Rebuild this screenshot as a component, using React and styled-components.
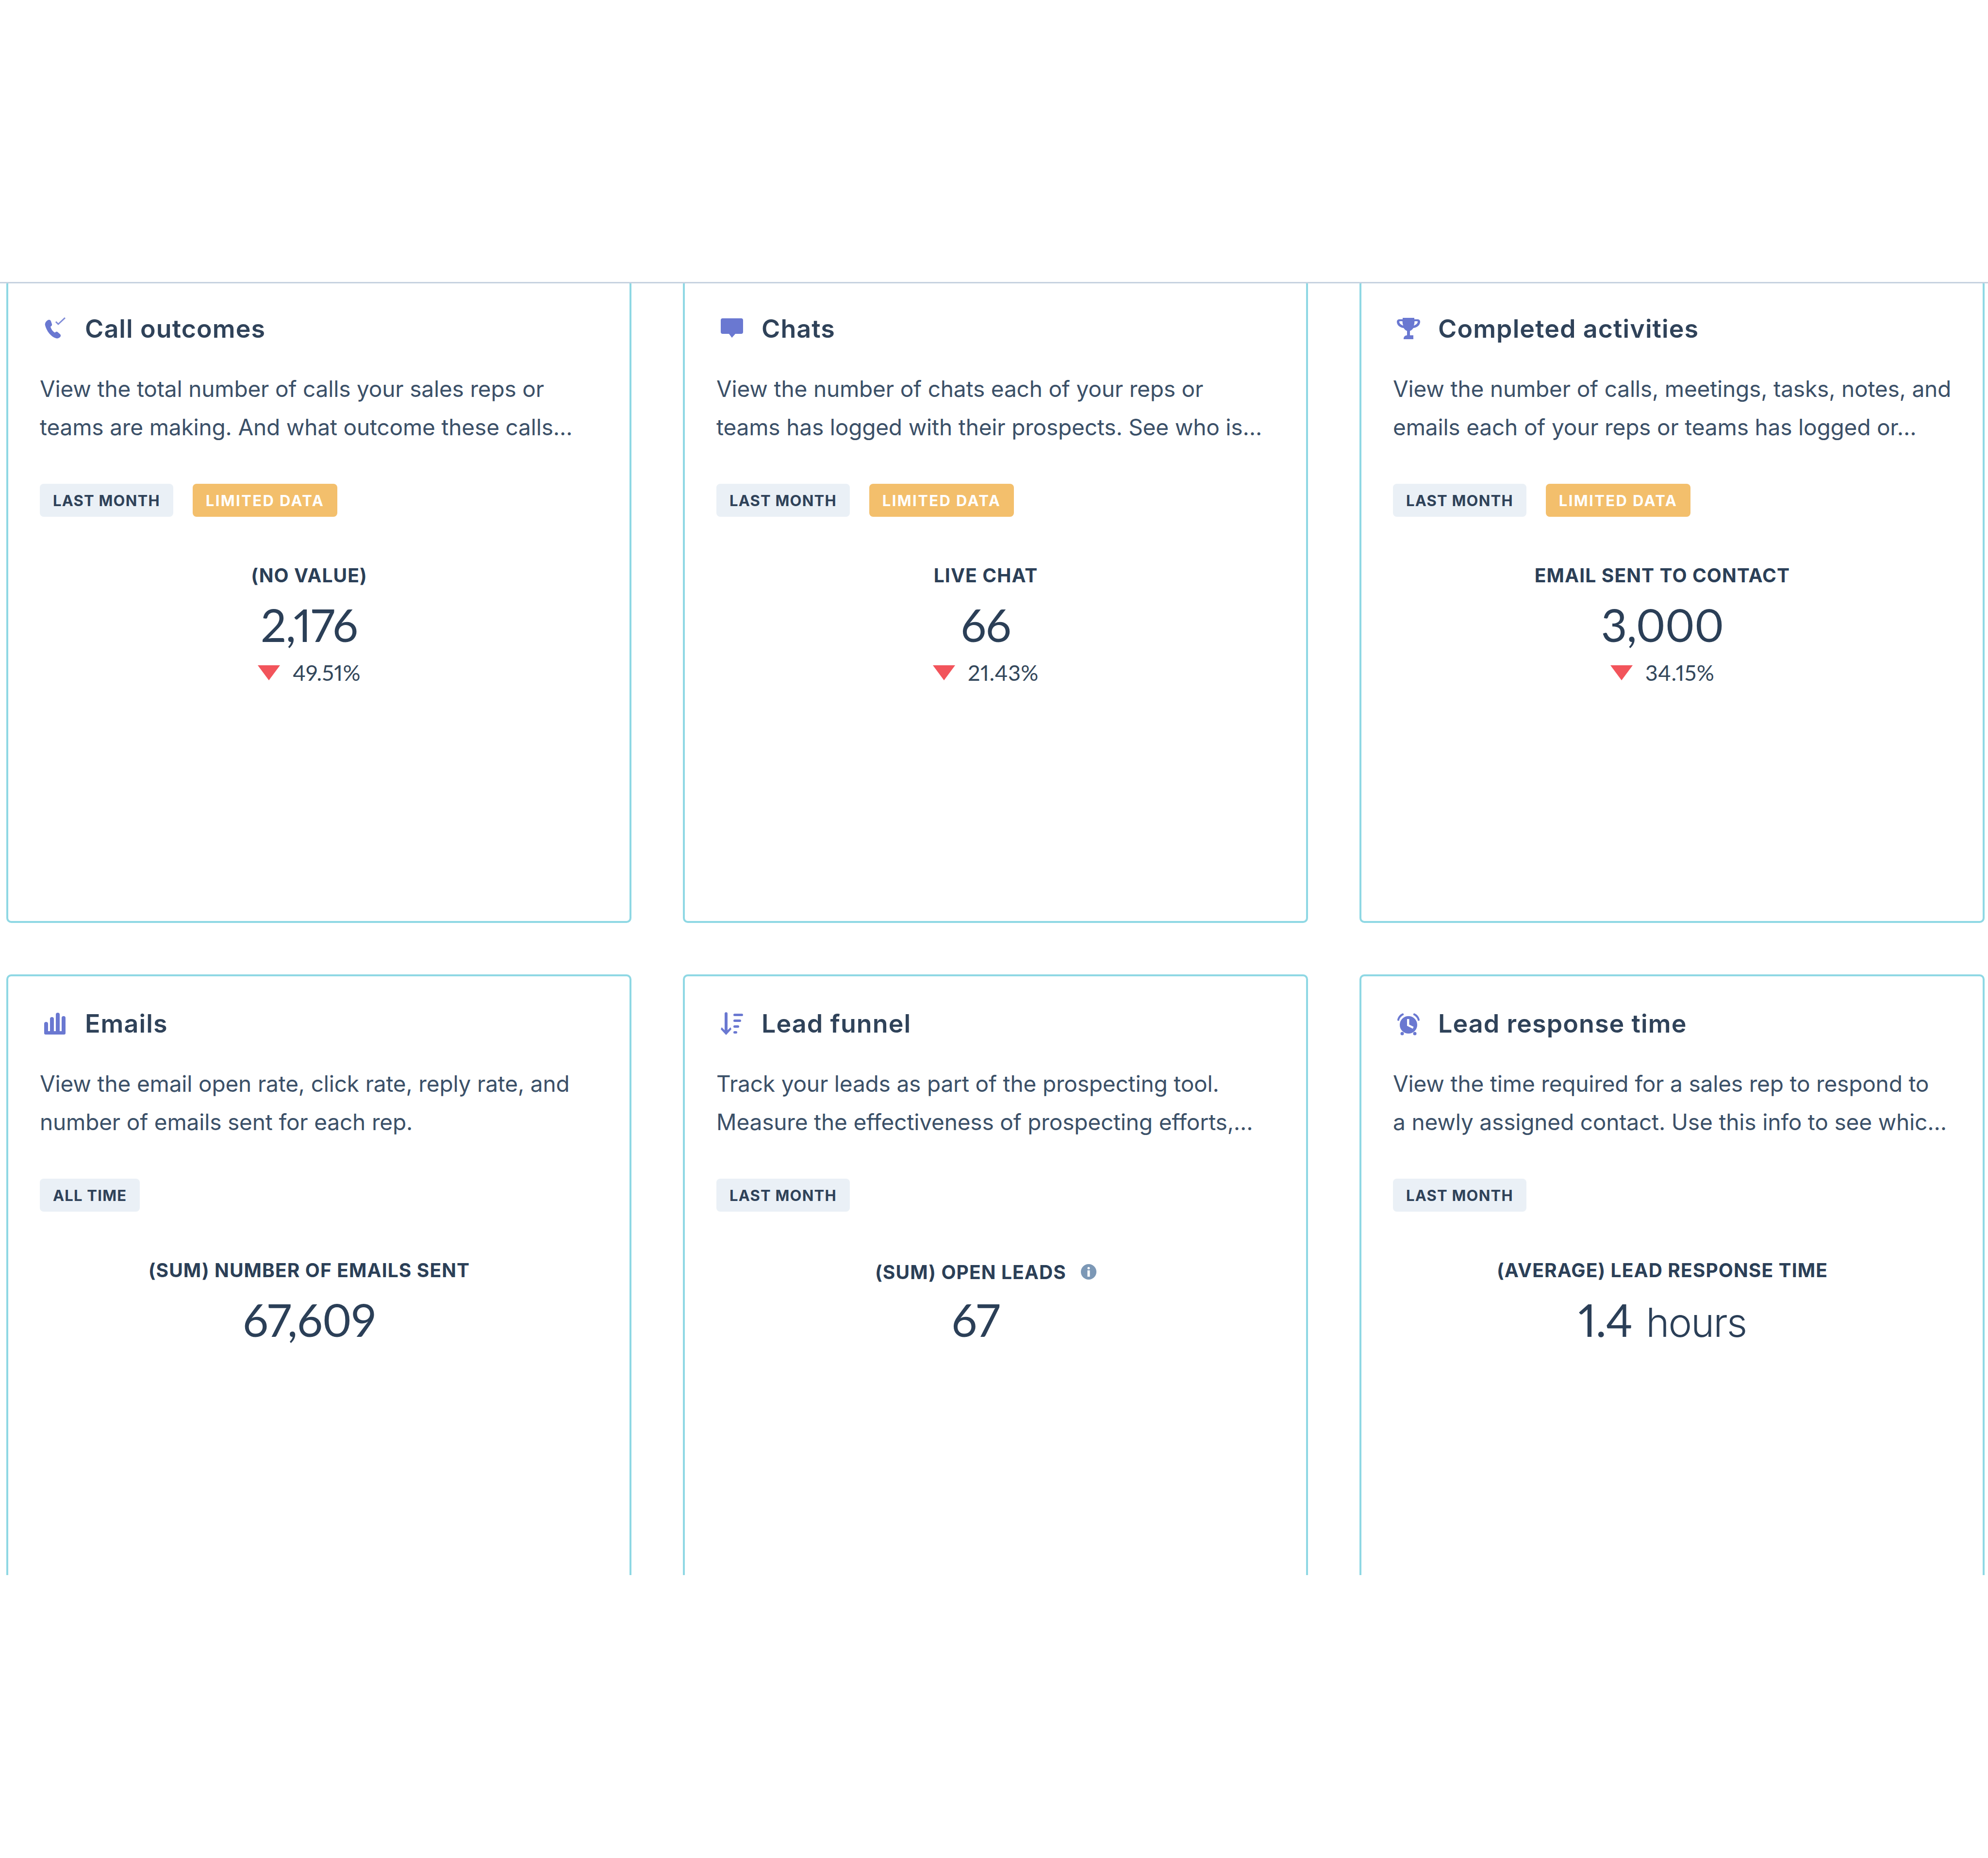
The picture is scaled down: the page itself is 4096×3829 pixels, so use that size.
import React from "react";
import styled, { createGlobalStyle } from "styled-components";

const Global = createGlobalStyle`
  html, body { margin: 0; padding: 0; background: #fff; }
  body { font-family: Inter, "Noto Sans", sans-serif; color: #33475b; }
`;

const Page = styled.div`
  width: 4096px;
  height: 3829px;
  padding-top: 581px;
  box-sizing: border-box;
  background: #fff;
`;

const Viewport = styled.section`
  height: 2665px;
  overflow: hidden;
  border-top: 3px solid #c6d2e0;
  box-sizing: border-box;
`;

const Grid = styled.div`
  display: grid;
  grid-template-columns: repeat(3, 1288px);
  grid-auto-rows: 1326px;
  column-gap: 106px;
  row-gap: 106px;
  margin: -8px 0 0 13px;
`;

const Card = styled.article`
  border: 4px solid #8fd8e4;
  border-radius: 10px;
  padding: 68px 65px 0;
  box-sizing: border-box;
  background: #fff;
`;

const TitleRow = styled.header`
  display: flex;
  align-items: center;
  height: 60px;
`;

const IconSlot = styled.span`
  display: flex;
  width: 93px;
  flex: none;
  padding-left: 8px;
  box-sizing: border-box;
  color: #6a78d1;
`;

const Title = styled.h2`
  margin: 0;
  font-size: 52px;
  font-weight: 600;
  line-height: 60px;
  letter-spacing: 1.1px;
  color: #2f4259;
`;

const Description = styled.p`
  margin: 54px 0 0;
  font-size: 46px;
  font-weight: 400;
  line-height: 79px;
  letter-spacing: -0.17px;
  color: #3b5068;
`;

const Line = styled.span`
  display: block;
  white-space: nowrap;
`;

const Badges = styled.div`
  display: flex;
  gap: 40px;
  margin-top: 77px;
`;

const Badge = styled.span`
  display: flex;
  align-items: center;
  height: 68px;
  padding: 0 27px;
  border-radius: 8px;
  font-size: 31px;
  font-weight: 700;
  letter-spacing: ${(p) => (p.$warn ? "2.4px" : "1.2px")};
  white-space: nowrap;
  background: ${(p) => (p.$warn ? "#f3bf6c" : "#eaf0f6")};
  color: ${(p) => (p.$warn ? "#fff" : "#2f4259")};
`;

const Metric = styled.div`
  width: 1110px;
  margin-top: 95px;
  display: flex;
  flex-direction: column;
  align-items: center;
`;

const MetricLabel = styled.div`
  display: flex;
  align-items: center;
  height: 50px;
  font-size: 39px;
  font-weight: 650;
  letter-spacing: 1.1px;
  white-space: nowrap;
  color: #2b3f57;
  transform: translateY(${(p) => p.$shift || 0}px);
`;

const InfoIcon = styled.svg`
  width: 32px;
  height: 32px;
  margin-left: 30px;
  color: #7c98b6;
`;

const Value = styled.div`
  margin-top: 22px;
  height: 110px;
  display: flex;
  align-items: baseline;
  font-family: Lato, sans-serif;
  font-size: 93px;
  line-height: 110px;
  font-weight: 400;
  font-variant-numeric: proportional-nums;
  letter-spacing: -1px;
  color: #2b3f57;
  transform: translateX(${(p) => p.$shift || 0}px);
`;

const Unit = styled.span`
  font-family: Inter, sans-serif;
  font-size: 82px;
  font-weight: 300;
  letter-spacing: -2px;
  margin-left: 28px;
`;

const Delta = styled.div`
  display: flex;
  align-items: center;
  gap: 26px;
  height: 54px;
  margin-top: 17px;
  font-family: Lato, sans-serif;
  font-size: 45px;
  letter-spacing: 0.5px;
  font-variant-numeric: proportional-nums;
  color: #33475b;
`;

const DownTriangle = styled.span`
  width: 0;
  height: 0;
  border-left: 23px solid transparent;
  border-right: 23px solid transparent;
  border-top: 31px solid #f2545b;
`;

const IconSvg = styled.svg`
  width: 48px;
  height: 48px;
  display: block;
  fill: currentColor;
`;

const PhoneIcon = () => (
  <IconSvg viewBox="0 0 48 48">
    <path d="M8 6c3-2 6-1 7 2l2 6c.6 2-.4 3.400-2 4.600l-1 .8c1.500 5 4.600 9.400 9 12l1.200-.9c1.700-1.200 3.400-1.200 4.800 0l4.600 4c2.200 2 2 4.600-.2 6.600-2.200 2-5.400 3-8.200 2C14.800 40 6 28 3 16.500 2 12.500 4.500 8.200 8 6z" />
    <path d="M25 9l5 5L44 1" fill="none" stroke="currentColor" strokeWidth="3" opacity="0.85" />
  </IconSvg>
);

const ChatIcon = () => (
  <IconSvg viewBox="0 0 48 48">
    <path d="M5 2h38a4 4 0 0 1 4 4v24a4 4 0 0 1-4 4H31l-7 8-6-8H5a4 4 0 0 1-4-4V6a4 4 0 0 1 4-4z" />
  </IconSvg>
);

const TrophyIcon = () => (
  <IconSvg viewBox="0 0 48 48">
    <path d="M12 1h24v3h6c4 0 6 2 6 5 0 7-6 12-14 13-2 3-4 5-7 6v9h7v7a1 1 0 0 1 0 1H14v-1c0-4 3-7 7-7v-9c-3-1-5-3-7-6C6 21 0 16 0 9c0-3 2-5 6-5h6V1zM5 9c0 3 3 6 8 8-1-3-1.500-6-1.500-9H7c-1.200 0-2 0-2 1zm38 0c0-1-.8-1-2-1h-4.500c0 3-.5 6-1.500 9 5-2 8-5 8-8z" fillRule="evenodd" />
  </IconSvg>
);

const BarsIcon = () => (
  <IconSvg viewBox="0 0 48 48">
    <path d="M1 24a4 4 0 0 1 8 0v15h4V14a4 4 0 0 1 8 0v25h4V5a4 4 0 0 1 8 0v34h4V12a4 4 0 0 1 8 0v31a3 3 0 0 1-3 3H4a3 3 0 0 1-3-3z" />
  </IconSvg>
);

const SortIcon = () => (
  <IconSvg viewBox="0 0 48 48">
    <path d="M9 3a3 3 0 0 1 6 0v34l6-6 2 4-11 12L1 35l2-4 6 6z" />
    <rect x="27" y="3" width="20" height="5" rx="2.500" />
    <rect x="27" y="15" width="16" height="5" rx="2.500" />
    <rect x="27" y="27" width="12" height="5" rx="2.500" />
    <rect x="27" y="39" width="8" height="5" rx="2.500" />
  </IconSvg>
);

const AlarmIcon = () => (
  <IconSvg viewBox="0 0 48 48">
    <path fillRule="evenodd" d="M24 8a18 18 0 1 1 0 36 18 18 0 0 1 0-36zm-3 6v14l12 6 1.500-4-9-4.500V14z" />
    <path d="M1 17c0-6 5-13 12-15l1.500 3.500C9 8 5 13 4.500 18zM47 17c0-6-5-13-12-15l-1.500 3.500C39 8 43 13 43.500 18z" />
    <circle cx="11" cy="44" r="3.500" />
    <circle cx="37" cy="44" r="3.500" />
  </IconSvg>
);

const cards = [
  {
    title: "Call outcomes",
    Icon: PhoneIcon,
    lines: ["View the total number of calls your sales reps or", "teams are making. And what outcome these calls…"],
    badges: ["LAST MONTH", "LIMITED DATA"],
    label: "(NO VALUE)",
    value: "2,176",
    delta: "49.51%",
  },
  {
    title: "Chats",
    Icon: ChatIcon,
    lines: ["View the number of chats each of your reps or", "teams has logged with their prospects. See who is…"],
    badges: ["LAST MONTH", "LIMITED DATA"],
    label: "LIVE CHAT",
    value: "66",
    delta: "21.43%",
  },
  {
    title: "Completed activities",
    Icon: TrophyIcon,
    lines: ["View the number of calls, meetings, tasks, notes, and", "emails each of your reps or teams has logged or…"],
    badges: ["LAST MONTH", "LIMITED DATA"],
    label: "EMAIL SENT TO CONTACT",
    value: "3,000",
    delta: "34.15%",
  },
  {
    title: "Emails",
    Icon: BarsIcon,
    lines: ["View the email open rate, click rate, reply rate, and", "number of emails sent for each rep."],
    badges: ["ALL TIME"],
    label: "(SUM) NUMBER OF EMAILS SENT",
    value: "67,609",
  },
  {
    title: "Lead funnel",
    Icon: SortIcon,
    lines: ["Track your leads as part of the prospecting tool.", "Measure the effectiveness of prospecting efforts,…"],
    badges: ["LAST MONTH"],
    label: "(SUM) OPEN LEADS",
    info: true,
    value: "67",
    valueShift: -21,
  },
  {
    title: "Lead response time",
    Icon: AlarmIcon,
    lines: ["View the time required for a sales rep to respond to", "a newly assigned contact. Use this info to see whic…"],
    badges: ["LAST MONTH"],
    label: "(AVERAGE) LEAD RESPONSE TIME",
    value: "1.4",
    unit: "hours",
  },
];

export default function App() {
  return (
    <Page>
      <Global />
      <Viewport>
        <Grid>
          {cards.map(({ title, Icon, lines, badges, label, info, value, valueShift, unit, delta }) => (
            <Card key={title}>
              <TitleRow>
                <IconSlot><Icon /></IconSlot>
                <Title>{title}</Title>
              </TitleRow>
              <Description>
                {lines.map((l) => <Line key={l}>{l}</Line>)}
              </Description>
              <Badges>
                {badges.map((b) => <Badge key={b} $warn={b === "LIMITED DATA"}>{b}</Badge>)}
              </Badges>
              <Metric>
                <MetricLabel $shift={info ? 4 : 0}>
                  {label}
                  {info && (
                    <InfoIcon viewBox="0 0 32 32">
                      <circle cx="16" cy="16" r="16" fill="currentColor" />
                      <rect x="13.500" y="6" width="5" height="5" rx="2.500" fill="#fff" />
                      <rect x="13.500" y="13" width="5" height="13" fill="#fff" />
                    </InfoIcon>
                  )}
                </MetricLabel>
                <Value $shift={valueShift}>
                  {value}
                  {unit && <Unit>{unit}</Unit>}
                </Value>
                {delta && (
                  <Delta>
                    <DownTriangle />
                    {delta}
                  </Delta>
                )}
              </Metric>
            </Card>
          ))}
        </Grid>
      </Viewport>
    </Page>
  );
}
